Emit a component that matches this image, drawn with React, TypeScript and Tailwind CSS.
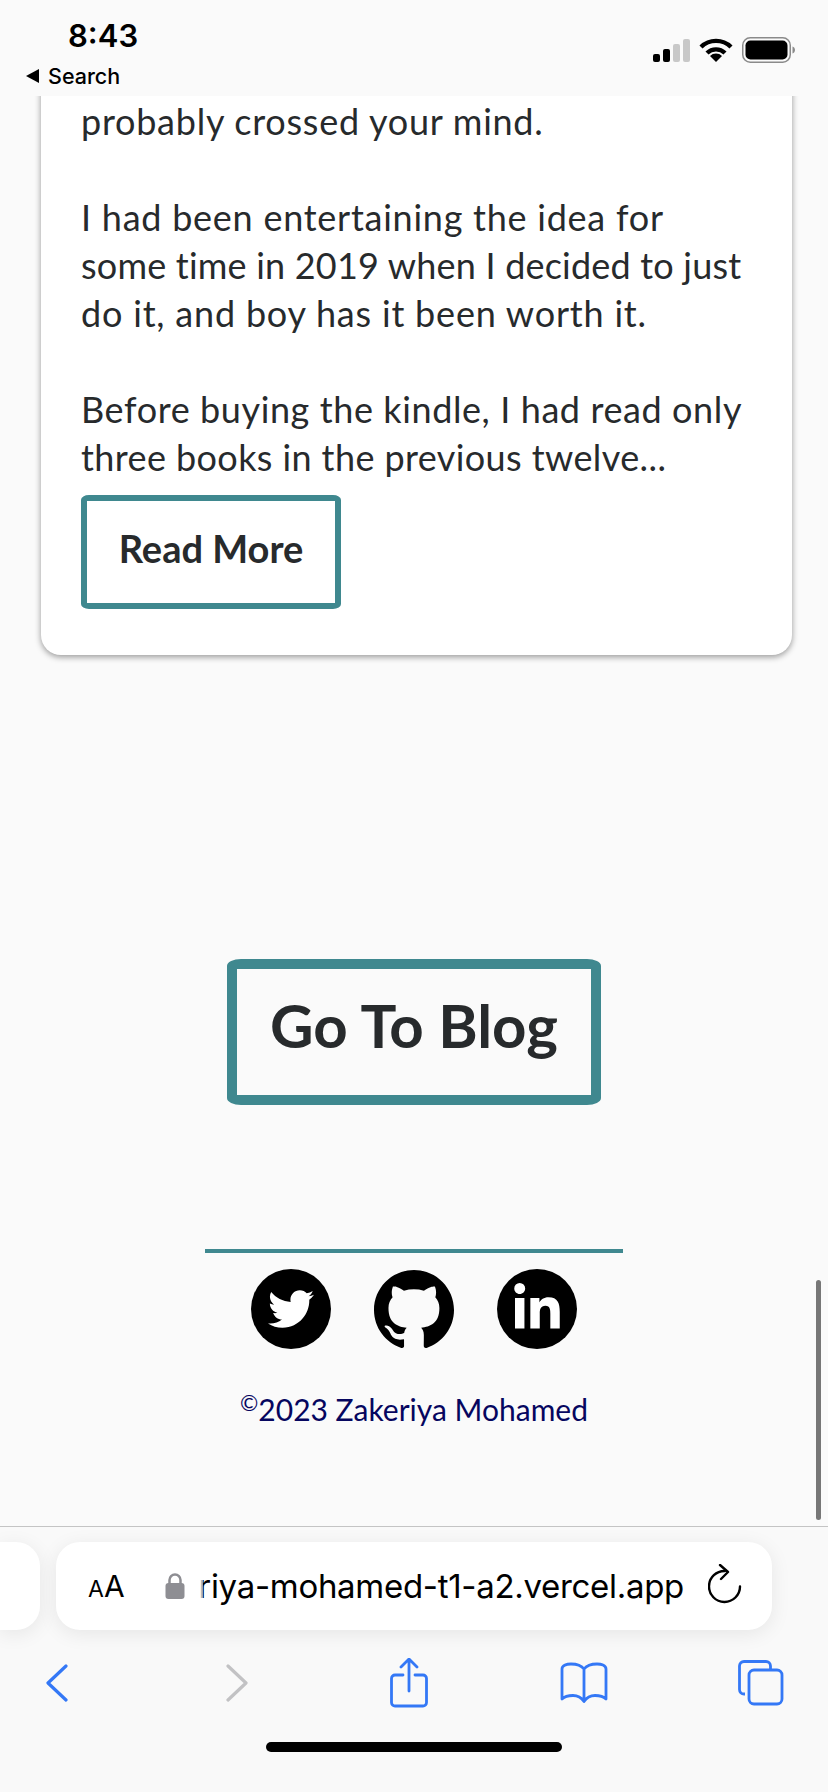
import { FaLinkedinIn, FaTwitter } from "react-icons/fa";
import { SiGithub } from "react-icons/si";

const BODY_FONT = "font-['Lato',sans-serif]";

const paragraphs = [
  [{ text: "probably crossed your mind.", tracking: "tracking-[0.75px]" }],
  [
    { text: "I had been entertaining the idea for", tracking: "tracking-[0.75px]" },
    { text: "some time in 2019 when I decided to just", tracking: "tracking-[0.2px]" },
    { text: "do it, and boy has it been worth it.", tracking: "tracking-[0.8px]" },
  ],
  [
    { text: "Before buying the kindle, I had read only", tracking: "tracking-[0.6px]" },
    { text: "three books in the previous twelve...", tracking: "tracking-[0.4px]" },
  ],
];

function StatusBar() {
  return (
    <header className="relative z-10 flex h-[96px] shrink-0 justify-between bg-[#fafafa] font-['Inter',sans-serif] text-black">
      <div className="flex flex-col">
        <span className="ml-[68px] mt-[18px] text-[31px] font-semibold leading-[36px]">8:43</span>
        <div className="ml-[25px] mt-[9px] flex items-center gap-[9px]">
          <svg width="14" height="16" viewBox="0 0 14 16">
            <path d="M14 1v14L1 8z" fill="#000" />
          </svg>
          <span className="text-[21.500px] font-medium leading-[26px]">Search</span>
        </div>
      </div>
      <div className="mr-[33px] mt-[37px] flex h-[26px] items-center gap-[9px]">
        <svg width="37" height="23" viewBox="0 0 37 23">
          <rect x="0" y="15" width="7" height="8" rx="2" fill="#000" />
          <rect x="10" y="10" width="7" height="13" rx="2" fill="#000" />
          <rect x="20" y="5" width="7" height="18" rx="2" fill="#c8c8c8" />
          <rect x="30" y="0" width="7" height="23" rx="2" fill="#c8c8c8" />
        </svg>
        <svg width="34" height="24" viewBox="0 0 34 24" fill="none" stroke="#000" strokeWidth="4.400">
          <path d="M2 9a21.500 21.500 0 0 1 30 0" />
          <path d="M8 15a13 13 0 0 1 18 0" />
          <path d="M17 24l-6-6a8.500 8.500 0 0 1 12 0z" fill="#000" stroke="none" />
        </svg>
        <svg width="53" height="26" viewBox="0 0 53 26">
          <rect x="0.750" y="0.750" width="47.500" height="24.500" rx="7.500" fill="none" stroke="#8a8a8a" strokeWidth="1.500" />
          <rect x="3.500" y="3.500" width="42" height="19" rx="5" fill="#000" />
          <path d="M50.500 9.500c1.500.4 2.500 2 2.500 3.500s-1 3.100-2.500 3.500z" fill="#8a8a8a" />
        </svg>
      </div>
    </header>
  );
}

function BrowserBar() {
  return (
    <footer className="relative flex h-[266px] shrink-0 flex-col border-t border-[#c4c4c4] bg-[#f9f9f9]">
      <div className="mt-[15px] flex h-[88px] gap-[16px]">
        <div className="w-[40px] rounded-r-[24px] bg-white shadow-[0_4px_20px_rgba(0,0,0,0.08)]" />
        <div className="flex w-[716px] items-center rounded-[24px] bg-white font-['Inter',sans-serif] text-black shadow-[0_4px_20px_rgba(0,0,0,0.08)]">
          <span className="ml-[32px] w-[40px] whitespace-nowrap text-[30px] leading-none">
            <span className="text-[23px]">A</span>A
          </span>
          <svg className="ml-[37px]" width="20" height="26" viewBox="0 0 20 26">
            <path d="M4.500 11V7a5.500 5.500 0 0 1 11 0v4" fill="none" stroke="#8e8e93" strokeWidth="2.500" />
            <rect x="0.500" y="10" width="19" height="16" rx="3" fill="#8e8e93" />
          </svg>
          <div className="relative ml-[12px] flex w-[487px] justify-end overflow-hidden">
            <span className="whitespace-nowrap text-[33px] leading-[40px] tracking-[-0.3px]">eriya-mohamed-t1-a2.vercel.app</span>
            <div className="absolute left-0 top-0 h-full w-[6px] bg-gradient-to-r from-white from-20% to-white/60" />
          </div>
          <svg className="ml-[24px] -mt-[4px]" width="34" height="40" viewBox="0 0 34 40" fill="none" stroke="#000" strokeWidth="2.400" strokeLinecap="round" strokeLinejoin="round">
            <path d="M17 7A15.500 15.500 0 1 0 32 22.500" />
            <path d="M12 1l8 7-7 7" />
          </svg>
        </div>
      </div>
      <nav className="mt-[25px] flex h-[56px] items-center pl-[46px]">
        <svg width="22" height="38" viewBox="0 0 22 38" fill="none" stroke="#3478f6" strokeWidth="3.200" strokeLinecap="round" strokeLinejoin="round">
          <path d="M20 2L2 19l18 17" />
        </svg>
        <svg className="ml-[158px]" width="22" height="38" viewBox="0 0 22 38" fill="none" stroke="#c2c2c4" strokeWidth="3.200" strokeLinecap="round" strokeLinejoin="round">
          <path d="M2 2l18 17L2 36" />
        </svg>
        <svg className="ml-[142px]" width="38" height="50" viewBox="0 0 38 50" fill="none" stroke="#3478f6" strokeWidth="2.800" strokeLinecap="round" strokeLinejoin="round">
          <path d="M19 33V2M11 9l8-8 8 8" />
          <path d="M13 17H5a3.500 3.500 0 0 0-3.500 3.500v24A3.500 3.500 0 0 0 5 48h28a3.500 3.500 0 0 0 3.500-3.500v-24A3.500 3.500 0 0 0 33 17h-8" />
        </svg>
        <svg className="ml-[132px]" width="48" height="42" viewBox="0 0 48 42" fill="none" stroke="#3478f6" strokeWidth="2.800" strokeLinecap="round" strokeLinejoin="round">
          <path d="M24 7C21 3 16 2 11 2 7 2 2 3 2 7v30c3-3 7-3.500 11-3.500s8 1.500 11 6c3-4.500 7-6 11-6s8 .5 11 3.500V7c0-4-5-5-9-5-5 0-10 1-13 5zM24 7v31" />
        </svg>
        <svg className="ml-[130px]" width="46" height="46" viewBox="0 0 46 46" fill="none" stroke="#3478f6" strokeWidth="2.800" strokeLinejoin="round">
          <path d="M7 34H6a4.500 4.500 0 0 1-4.500-4.500V6A4.500 4.500 0 0 1 6 1.500h22A4.500 4.500 0 0 1 32.500 6v3" />
          <rect x="11" y="10" width="33" height="34" rx="5" />
        </svg>
      </nav>
      <div className="mt-[31px] flex justify-center">
        <div className="h-[10px] w-[296px] rounded-full bg-black" />
      </div>
    </footer>
  );
}

export default function App() {
  return (
    <div className={`relative flex h-[1792px] w-[828px] flex-col overflow-hidden bg-[#fafafa] ${BODY_FONT}`}>
      <StatusBar />
      <main className="flex min-h-0 flex-1 flex-col items-center overflow-hidden">
        <section className="-mt-[20px] ml-[41px] w-[751px] self-start rounded-b-[20px] bg-white pb-[46px] pl-[40px] pt-[21px] shadow-[0_2px_6px_rgba(0,0,0,0.4)]">
          <div className="flex flex-col gap-[48px] text-[36px] leading-[48px] text-[#272a2c]">
            {paragraphs.map((lines, i) => (
              <p key={i}>
                {lines.map((line) => (
                  <span key={line.text} className={`block whitespace-nowrap ${line.tracking}`}>
                    {line.text}
                  </span>
                ))}
              </p>
            ))}
          </div>
          <a className="mt-[14px] flex h-[114px] w-[260px] items-center justify-center rounded-[8px/5px] border-[6px] border-[#3f888f] pb-[8px] text-[38px] font-bold text-[#272a2c]">
            Read More
          </a>
        </section>

        <a className="mt-[304px] flex h-[146px] w-[374px] items-center justify-center rounded-[14px/7px] border-[10px] border-[#3f888f] pb-[14px] text-[60px] font-bold text-[#272a2c]">
          Go To Blog
        </a>

        <div className="mt-[144px] h-[4px] w-[418px] bg-[#3f888f]" />
        <div className="mt-[16px] flex gap-[43px] text-black">
          <div className="flex h-[80px] w-[80px] items-center justify-center rounded-full bg-black">
            <FaTwitter className="text-white" size={46} />
          </div>
          <SiGithub size={80} />
          <div className="flex h-[80px] w-[80px] items-center justify-center rounded-full bg-black">
            <FaLinkedinIn className="text-white" size={52} />
          </div>
        </div>
        <p className="mt-[40px] flex whitespace-nowrap text-[30px] leading-[40px] text-[#06065f]">
          <span className="-mt-[6px] text-[22px]">©</span>
          2023 Zakeriya Mohamed
        </p>
      </main>
      <BrowserBar />
      <div className="absolute left-[816px] top-[1280px] h-[240px] w-[5px] rounded-full bg-[#777777]" />
    </div>
  );
}
